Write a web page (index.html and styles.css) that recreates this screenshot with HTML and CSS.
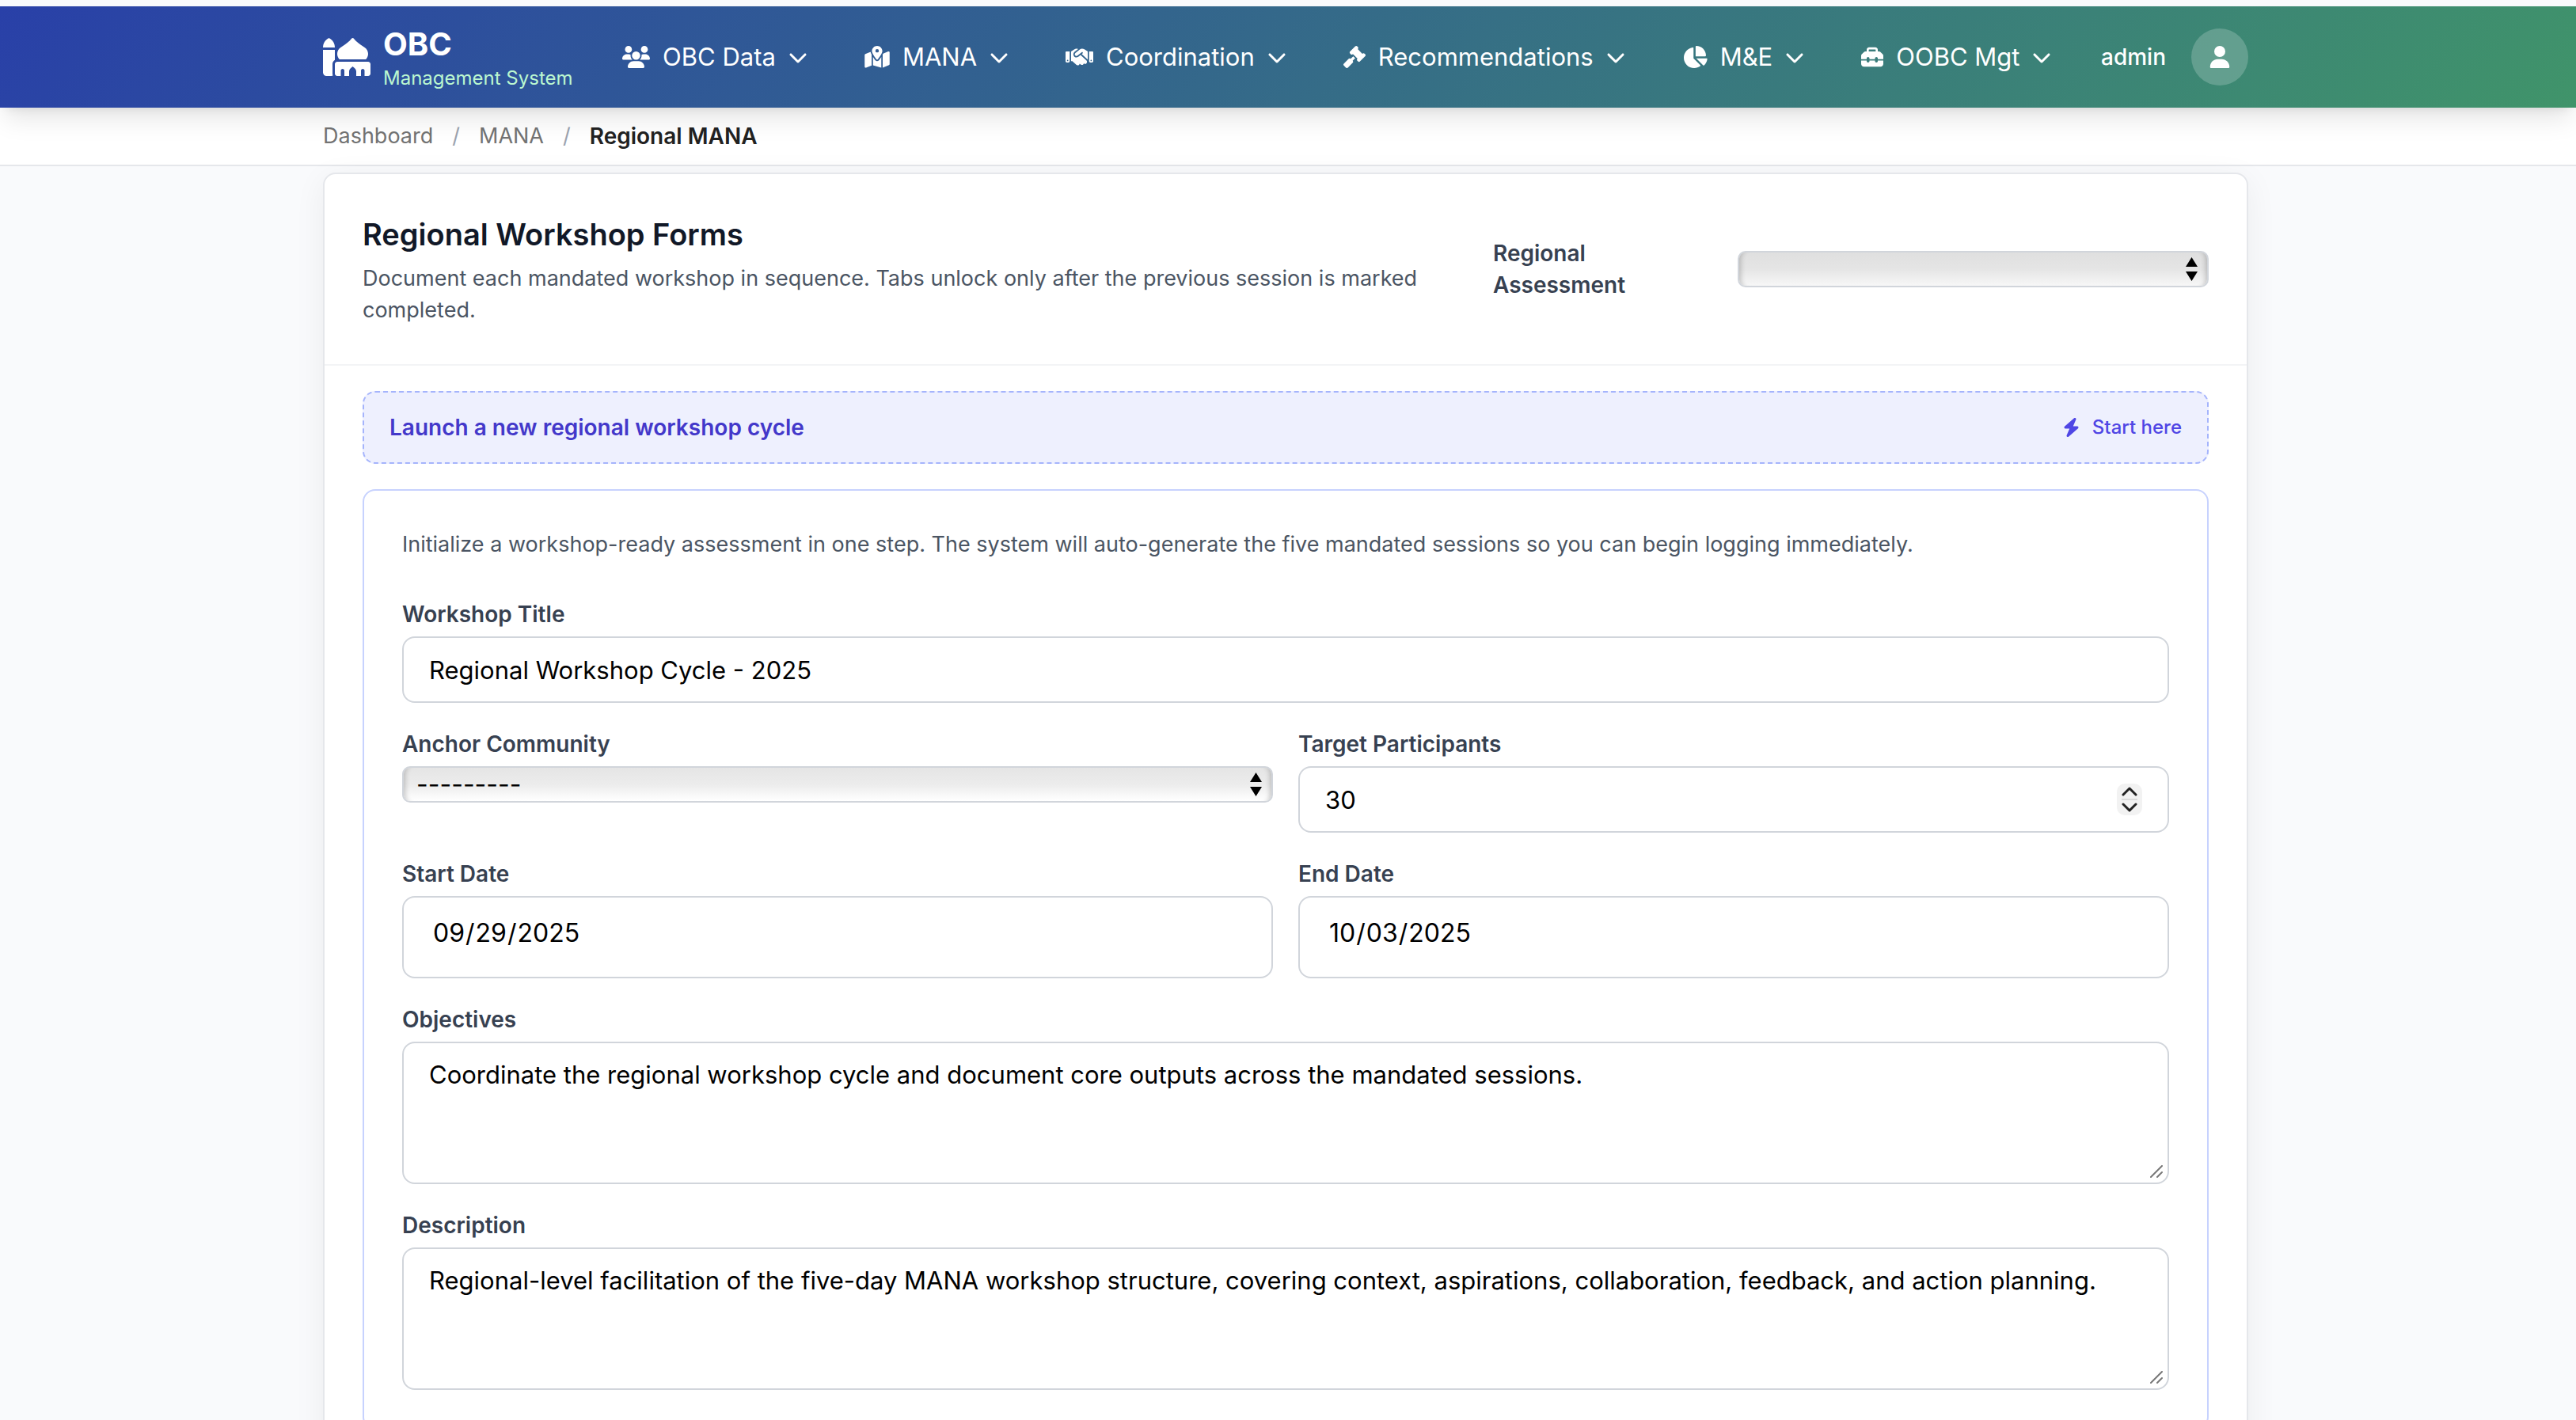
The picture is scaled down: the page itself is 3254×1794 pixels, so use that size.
FILE: index.html
```html
<!DOCTYPE html>
<html lang="en">
<head>
  <meta charset="utf-8">
  <meta name="viewport" content="width=device-width, initial-scale=1">
  <title>Regional MANA</title>
  <link rel="stylesheet" href="styles.css">
</head>
<body>
  <svg class="sprite" aria-hidden="true">
    <symbol id="chevron" viewBox="0 0 512 512"><path d="M233.4 406.6c12.5 12.5 32.8 12.5 45.3 0l192-192c12.5-12.5 12.5-32.8 0-45.3s-32.8-12.5-45.3 0L256 338.7 86.6 169.4c-12.5-12.5-32.8-12.5-45.3 0s-12.5 32.8 0 45.3l192 192z"/></symbol>
    <symbol id="sort" viewBox="0 0 15 30"><path d="M7.500 0L15 12H0zM0 18H15L7.500 30z"/></symbol>
    <symbol id="grip" viewBox="0 0 16 16"><path d="M1 15L15 1M9 15L15 9" fill="none" stroke="currentColor" stroke-width="2" stroke-linecap="round"/></symbol>
  </svg>

  <div class="page">
    <header class="topbar">
      <div class="container topbar-row">
        <a class="brand" href="#">
          <svg class="brand-icon" viewBox="0 0 640 512" aria-hidden="true"><path d="M400 0c5 0 9.800 2.400 12.800 6.400c34.700 46.300 78.100 74.900 133.500 111.500c5.200 3.400 10.500 7 16 10.600c28.900 19.200 45.700 51.700 45.700 86.100c0 28.600-11.300 54.500-29.800 73.400H221.800c-18.400-19-29.800-44.900-29.800-73.400c0-34.400 16.700-66.900 45.700-86.100c5.400-3.600 10.800-7.100 16-10.600C309.100 81.300 352.500 52.700 387.200 6.400c3-4 7.800-6.400 12.800-6.400zM288 512V440c0-13.300-10.700-24-24-24s-24 10.700-24 24v72H192c-17.700 0-32-14.300-32-32V352c0-17.700 14.300-32 32-32H608c17.700 0 32 14.300 32 32V480c0 17.700-14.300 32-32 32H560V440c0-13.300-10.700-24-24-24s-24 10.700-24 24v72H448V454c0-19-8.400-37-23-49.200L400 384l-25 20.800C360.400 417 352 435 352 454v58H288zM70.400 5.200c5.700-4.300 13.500-4.300 19.200 0l16 12C139.800 42.900 160 83.200 160 126v2H0v-2C0 83.200 20.200 42.900 54.400 17.200l16-12zM0 160H160V296.600c-19.100 11.100-32 31.700-32 55.400V480c0 9.600 2.100 18.600 5.800 26.800c-6.600 3.400-14 5.200-21.800 5.200H48c-26.500 0-48-21.500-48-48V160z"/></svg>
          <span class="brand-text">
            <span class="brand-name">OBC</span>
            <span class="brand-sub">Management System</span>
          </span>
        </a>

        <nav class="menu" aria-label="Main">
          <button class="menu-item" type="button">
            <svg class="icon icon-xwide" viewBox="0 0 640 512" aria-hidden="true"><path d="M144 0a80 80 0 1 1 0 160A80 80 0 1 1 144 0zM512 0a80 80 0 1 1 0 160A80 80 0 1 1 512 0zM0 298.700C0 239.800 47.800 192 106.700 192h42.700c15.900 0 31 3.500 44.600 9.700c-1.300 7.200-1.900 14.700-1.900 22.300c0 38.200 16.800 72.500 43.300 96H21.300C9.600 320 0 310.400 0 298.700zM405.300 320h-.7c26.600-23.500 43.300-57.800 43.300-96c0-7.600-.7-15-1.900-22.300c13.600-6.300 28.700-9.700 44.600-9.700h42.700C592.200 192 640 239.800 640 298.700c0 11.800-9.600 21.300-21.300 21.300H405.300zM224 224a96 96 0 1 1 192 0 96 96 0 1 1 -192 0zM128 485.300C128 411.700 187.700 352 261.300 352H378.700C452.300 352 512 411.700 512 485.300c0 14.700-11.900 26.700-26.700 26.700H154.700c-14.700 0-26.700-11.900-26.700-26.700z"/></svg>
            <span>OBC Data</span>
            <svg class="caret" aria-hidden="true"><use href="#chevron"/></svg>
          </button>
          <button class="menu-item" type="button">
            <svg class="icon icon-wide" viewBox="0 0 576 512" aria-hidden="true"><path d="M408 120c0 54.600-73.100 151.900-105.200 192c-7.700 9.600-22 9.600-29.600 0C241.100 271.900 168 174.600 168 120C168 53.700 221.700 0 288 0s120 53.700 120 120zm8 80.400c3.500-6.900 6.700-13.800 9.600-20.600c.5-1.200 1-2.500 1.500-3.700l116-46.400C558.900 123.400 576 135 576 152V422.800c0 9.800-6 18.600-15.100 22.300L416 503V200.400zM137.600 138.300c2.400 14.100 7.200 28.300 12.800 41.500c2.900 6.800 6.100 13.700 9.600 20.600V451.800L32.900 502.700C17.100 509 0 497.400 0 480.400V209.600c0-9.800 6-18.600 15.100-22.300l122.600-49zM327.800 332c13.900-17.400 35.700-45.700 56.200-77V504.300L192 449.400V255c20.500 31.300 42.300 59.600 56.200 77c20.500 25.600 59.100 25.600 79.600 0zM288 152a40 40 0 1 0 0-80 40 40 0 1 0 0 80z"/></svg>
            <span>MANA</span>
            <svg class="caret" aria-hidden="true"><use href="#chevron"/></svg>
          </button>
          <button class="menu-item" type="button">
            <svg class="icon icon-xwide" viewBox="0 0 640 512" aria-hidden="true"><path d="M323.400 85.200l-96.800 78.400c-16.100 13-19.200 36.400-7 53.100c12.900 17.800 38 21.300 55.300 7.800l99.300-77.200c7-5.400 17-4.200 22.500 2.800s4.200 17-2.800 22.500l-20.900 16.200L512 316.800V128h-.7l-3.900-2.500L434.800 79c-15.300-9.800-33.200-15-51.400-15c-21.800 0-43 7.500-60 21.200zm22.800 124.400l-51.700 40.200C263 274.300 217.300 268 193.700 235.600c-22.200-30.500-16.600-73.100 12.700-96.800l83.200-67.300c-11.600-4.900-24.100-7.400-36.800-7.400C234 64 215.700 69.600 200 80l-72 48V352h28.200l91.400 83.400c19.600 17.900 49.900 16.500 67.800-3.100c5.500-6.100 9.200-13.200 11.100-20.600l17 15.600c19.500 17.900 49.900 16.600 67.800-2.900c4.500-4.900 7.800-10.600 9.900-16.500c19.400 13 45.800 10.300 62.100-7.500c17.900-19.500 16.600-49.900-2.900-67.800l-134.200-123zM16 128c-8.800 0-16 7.200-16 16V352c0 17.700 14.300 32 32 32H64c17.700 0 32-14.300 32-32V128H16zM48 320a16 16 0 1 1 0 32 16 16 0 1 1 0-32zM544 128V352c0 17.700 14.300 32 32 32h32c17.700 0 32-14.300 32-32V144c0-8.800-7.200-16-16-16H544zm32 208a16 16 0 1 1 32 0 16 16 0 1 1 -32 0z"/></svg>
            <span>Coordination</span>
            <svg class="caret" aria-hidden="true"><use href="#chevron"/></svg>
          </button>
          <button class="menu-item" type="button">
            <svg class="icon" viewBox="0 0 512 512" aria-hidden="true"><path d="M318.600 9.400c-12.500-12.500-32.800-12.500-45.300 0l-120 120c-12.500 12.500-12.500 32.800 0 45.300l16 16c12.500 12.500 32.800 12.500 45.300 0l4-4L325.400 293.400l-4 4c-12.500 12.500-12.500 32.800 0 45.300l16 16c12.500 12.500 32.800 12.500 45.300 0l120-120c12.500-12.500 12.500-32.800 0-45.300l-16-16c-12.500-12.500-32.800-12.500-45.300 0l-4 4L330.600 74.600l4-4c12.500-12.500 12.500-32.800 0-45.300l-16-16zm-152 288c-12.500-12.500-32.800-12.500-45.300 0l-112 112c-12.500 12.500-12.500 32.800 0 45.300l48 48c12.500 12.500 32.800 12.500 45.300 0l112-112c12.500-12.500 12.500-32.800 0-45.300l-1.400-1.400L272 285.300 226.700 240 168 298.700l-1.400-1.400z"/></svg>
            <span>Recommendations</span>
            <svg class="caret" aria-hidden="true"><use href="#chevron"/></svg>
          </button>
          <button class="menu-item" type="button">
            <svg class="icon icon-wide" viewBox="0 0 576 512" aria-hidden="true"><path d="M304 240V16.600c0-9 7-16.600 16-16.600C443.700 0 544 100.300 544 224c0 9-7.600 16-16.600 16H304zM32 272C32 150.700 122.100 50.300 239 34.300c9.200-1.300 17 6.100 17 15.400V288L412.500 444.500c6.700 6.700 6.200 17.700-1.500 23.100C371.800 495.600 323.800 512 272 512C139.500 512 32 404.600 32 272zm526.400 16c9.300 0 16.600 7.800 15.400 17c-7.700 55.900-34.600 105.600-73.900 142.300c-6 5.600-15.400 5.200-21.200-.7L320 288H558.400z"/></svg>
            <span>M&amp;E</span>
            <svg class="caret" aria-hidden="true"><use href="#chevron"/></svg>
          </button>
          <button class="menu-item" type="button">
            <svg class="icon" viewBox="0 0 512 512" aria-hidden="true"><path d="M176 88v40H336V88c0-4.400-3.600-8-8-8H184c-4.400 0-8 3.600-8 8zm-48 40V88c0-30.900 25.100-56 56-56H328c30.900 0 56 25.100 56 56v40h28.100c12.700 0 24.900 5.100 33.900 14.100l51.900 51.900c9 9 14.100 21.200 14.100 33.900V304H384V288c0-17.700-14.300-32-32-32s-32 14.300-32 32v16H192V288c0-17.700-14.300-32-32-32s-32 14.300-32 32v16H0V227.900c0-12.700 5.100-24.900 14.100-33.900l51.900-51.900c9-9 21.200-14.100 33.900-14.100H128zM0 416V336H128v16c0 17.700 14.300 32 32 32s32-14.300 32-32V336H320v16c0 17.700 14.300 32 32 32s32-14.300 32-32V336H512v80c0 35.300-28.700 64-64 64H64c-35.300 0-64-28.700-64-64z"/></svg>
            <span>OOBC Mgt</span>
            <svg class="caret" aria-hidden="true"><use href="#chevron"/></svg>
          </button>
        </nav>

        <a class="account" href="#">
          <span>admin</span>
          <span class="avatar">
            <svg class="icon" viewBox="0 0 448 512" aria-hidden="true"><path d="M224 256A128 128 0 1 0 224 0a128 128 0 1 0 0 256zm-45.700 48C79.800 304 0 383.800 0 482.300C0 498.700 13.300 512 29.700 512H418.300c16.400 0 29.700-13.300 29.700-29.700C448 383.800 368.200 304 269.700 304H178.300z"/></svg>
          </span>
        </a>
      </div>
    </header>

    <nav class="crumbs" aria-label="Breadcrumb">
      <ol class="container crumbs-list">
        <li><a href="#">Dashboard</a></li>
        <li class="crumb-sep" aria-hidden="true">/</li>
        <li><a href="#">MANA</a></li>
        <li class="crumb-sep" aria-hidden="true">/</li>
        <li class="crumb-current" aria-current="page">Regional MANA</li>
      </ol>
    </nav>

    <main class="container">
      <section class="card">
        <div class="card-head">
          <div class="card-intro">
            <h1>Regional Workshop Forms</h1>
            <p>Document each mandated workshop in sequence. Tabs unlock only after the previous session is marked completed.</p>
          </div>
          <div class="assessment">
            <label for="assessment">Regional Assessment</label>
            <div class="select">
              <select id="assessment" class="select-dim"><option></option></select>
              <svg class="select-arrows" aria-hidden="true"><use href="#sort"/></svg>
            </div>
          </div>
        </div>

        <div class="card-body">
          <button class="launch" type="button">
            <span class="launch-title">Launch a new regional workshop cycle</span>
            <span class="launch-hint">
              <svg class="bolt" viewBox="0 0 448 512" aria-hidden="true"><path d="M349.400 44.600c5.900-13.700 1.500-29.700-10.600-38.500s-28.600-8-39.900 1.800l-256 224c-10 8.800-13.600 22.900-8.900 35.300S50.700 288 64 288H175.500L98.600 467.400c-5.900 13.700-1.500 29.700 10.600 38.500s28.600 8 39.900-1.800l256-224c10-8.800 13.600-22.900 8.900-35.300s-16.600-20.700-30-20.700H272.500L349.400 44.600z"/></svg>
              Start here
            </span>
          </button>

          <form class="workshop">
            <p class="workshop-note">Initialize a workshop-ready assessment in one step. The system will auto-generate the five mandated sessions so you can begin logging immediately.</p>

            <div class="fields">
              <div class="field field-full">
                <label for="title">Workshop Title</label>
                <input id="title" class="control" type="text" value="Regional Workshop Cycle - 2025">
              </div>

              <div class="field">
                <label for="community">Anchor Community</label>
                <div class="select">
                  <select id="community"><option>---------</option></select>
                  <svg class="select-arrows" aria-hidden="true"><use href="#sort"/></svg>
                </div>
              </div>
              <div class="field">
                <label for="participants">Target Participants</label>
                <div class="number">
                  <input id="participants" class="control" type="number" value="30">
                  <svg class="stepper" viewBox="0 0 32 40" aria-hidden="true">
                    <rect width="32" height="40" rx="10" fill="#f2f2f2"/>
                    <path d="M6 20H26" stroke="#dcdcdc" stroke-width="2"/>
                    <path d="M8 14L16 6L24 14M8 26L16 34L24 26" fill="none" stroke="#222" stroke-width="3" stroke-linecap="round" stroke-linejoin="round"/>
                  </svg>
                </div>
              </div>

              <div class="field">
                <label for="start">Start Date</label>
                <input id="start" class="control control-date" type="date" value="2025-09-29">
              </div>
              <div class="field">
                <label for="end">End Date</label>
                <input id="end" class="control control-date" type="date" value="2025-10-03">
              </div>

              <div class="field field-full">
                <label for="objectives">Objectives</label>
                <div class="area">
                  <textarea id="objectives" class="control" rows="3">Coordinate the regional workshop cycle and document core outputs across the mandated sessions.</textarea>
                  <svg class="grip" aria-hidden="true"><use href="#grip"/></svg>
                </div>
              </div>
              <div class="field field-full">
                <label for="description">Description</label>
                <div class="area">
                  <textarea id="description" class="control" rows="3">Regional-level facilitation of the five-day MANA workshop structure, covering context, aspirations, collaboration, feedback, and action planning.</textarea>
                  <svg class="grip" aria-hidden="true"><use href="#grip"/></svg>
                </div>
              </div>
            </div>
          </form>
        </div>
      </section>
    </main>
  </div>
</body>
</html>
```
FILE: styles.css
```css
*,
*::before,
*::after {
  box-sizing: border-box;
}

body {
  margin: 0;
  background: #f9fafc;
  color: #111827;
  font-family: Inter, "Liberation Sans", sans-serif;
  font-size: 28px;
  line-height: 40px;
}

h1,
p,
ol {
  margin: 0;
  padding: 0;
}

a {
  color: inherit;
  text-decoration: none;
}

button,
input,
select,
textarea {
  font: inherit;
  color: inherit;
  margin: 0;
}

svg {
  display: block;
  flex: none;
  fill: currentColor;
}

.sprite {
  position: absolute;
  width: 0;
  height: 0;
}

.page {
  height: 100vh;
  padding-top: 8px;
  overflow-y: auto;
  scrollbar-width: none;
}

.container {
  width: 100%;
  max-width: 2566px;
  margin: 0 auto;
  padding: 0 70px 0 64px;
}

/* Top bar */

.topbar {
  position: relative;
  z-index: 2;
  background: linear-gradient(135deg, #2940a8, #40946a);
  box-shadow: 0 20px 30px -6px rgba(0, 0, 0, 0.1), 0 8px 12px -8px rgba(0, 0, 0, 0.1);
  color: #fff;
}

.topbar-row {
  display: flex;
  align-items: center;
  justify-content: space-between;
  height: 128px;
}

.brand {
  display: flex;
  align-items: center;
  gap: 16px;
}

.brand-icon {
  width: 60px;
  height: 48px;
}

.brand-text {
  display: flex;
  flex-direction: column;
}

.brand-name {
  font-size: 40px;
  font-weight: 700;
  line-height: 54px;
}

.brand-sub {
  color: #bbf7d0;
  font-size: 24px;
  line-height: 32px;
}

.menu {
  display: flex;
  gap: 24px;
}

.menu-item {
  display: flex;
  align-items: center;
  gap: 16px;
  padding: 16px 24px;
  border: 0;
  background: none;
  font-size: 31px;
  line-height: 48px;
}

.icon {
  width: 28px;
  height: 28px;
}

.icon-wide {
  width: 32px;
}

.icon-xwide {
  width: 35px;
}

.caret {
  width: 24px;
  height: 24px;
}

.account {
  display: flex;
  align-items: center;
  gap: 32px;
  font-weight: 500;
}

.avatar {
  display: flex;
  align-items: center;
  justify-content: center;
  width: 72px;
  height: 72px;
  border-radius: 50%;
  background: rgba(255, 255, 255, 0.2);
}

/* Breadcrumb */

.crumbs {
  border-bottom: 2px solid #e5e7eb;
  background: #fff;
}

.crumbs-list {
  display: flex;
  gap: 24px;
  padding-top: 16px;
  padding-bottom: 16px;
  color: #737373;
  font-size: 27px;
  list-style: none;
}

.crumb-sep {
  color: #9ca3af;
}

.crumb-current {
  color: #222;
  font-size: 28px;
  font-weight: 600;
}

/* Card */

.card {
  margin: 8px 0 48px;
  border: 2px solid #e5e7eb;
  border-radius: 16px;
  background: #fff;
  box-shadow: 0 8px 40px rgba(0, 0, 0, 0.06);
}

.card-head {
  display: flex;
  align-items: center;
  justify-content: space-between;
  gap: 80px;
  padding: 48px;
  border-bottom: 2px solid #f3f4f6;
}

.card-intro {
  display: grid;
  flex: 1;
  gap: 8px;
}

.card-intro h1 {
  font-size: 38px;
  font-weight: 600;
  line-height: 56px;
}

.card-intro p,
.workshop-note {
  color: #4b5563;
  font-size: 27px;
}

label {
  color: #374151;
  font-weight: 600;
}

.assessment {
  display: grid;
  grid-template-columns: 1fr 2fr;
  align-items: center;
  gap: 12px;
  flex: 0 0 904px;
}

.assessment label {
  padding-right: 48px;
}

.card-body {
  display: grid;
  gap: 32px;
  padding: 32px 48px 48px;
}

.launch {
  display: flex;
  align-items: center;
  justify-content: space-between;
  padding: 24px 32px;
  border: 2px dashed #a5b4fc;
  border-radius: 16px;
  background: #eef0fe;
  text-align: left;
}

.launch-title {
  color: #4338ca;
  font-weight: 600;
}

.launch-hint {
  display: flex;
  align-items: center;
  gap: 16px;
  color: #4f46e5;
  font-size: 24px;
  font-weight: 500;
}

.bolt {
  width: 21px;
  height: 24px;
}

/* Workshop form */

.workshop {
  display: grid;
  gap: 48px;
  padding: 48px;
  border: 2px solid #c7d2fe;
  border-radius: 16px;
}

.fields {
  display: grid;
  grid-template-columns: 1fr 1fr;
  align-items: start;
  gap: 32px;
}

.field {
  display: grid;
  gap: 8px;
}

.field-full {
  grid-column: 1 / -1;
}

.control {
  display: block;
  width: 100%;
  padding: 16px 32px;
  border: 2px solid #d1d5db;
  border-radius: 16px;
  background: #fff;
  color: #000;
  font-size: 31px;
  line-height: 48px;
  resize: none;
  appearance: none;
}

input.control {
  height: 84px;
}

input.control-date {
  height: 104px;
  padding: 16px 36px 26px;
  font-size: 32px;
}

.control-date::-webkit-calendar-picker-indicator,
.control::-webkit-inner-spin-button {
  display: none;
}

.select,
.number,
.area {
  position: relative;
}

select {
  display: block;
  width: 100%;
  height: 46px;
  padding: 0 48px 0 16px;
  border: 2px solid #d1d5db;
  border-radius: 10px;
  background: linear-gradient(#e5e5e5, #ececec 50%, #fff);
  box-shadow: inset 8px 0 6px -6px rgba(0, 0, 0, 0.2), inset -8px 0 6px -6px rgba(0, 0, 0, 0.2);
  color: #000;
  font-size: 32px;
  line-height: 40px;
  appearance: none;
}

.select-dim {
  background: linear-gradient(#dfdfdf, #e5e5e5 50%, #f7f7f7);
}

.select-arrows {
  position: absolute;
  top: 8px;
  right: 14px;
  width: 15px;
  height: 30px;
  color: #000;
  pointer-events: none;
}

.stepper {
  position: absolute;
  top: 22px;
  right: 34px;
  width: 32px;
  height: 40px;
}

.grip {
  position: absolute;
  right: 8px;
  bottom: 8px;
  width: 16px;
  height: 16px;
  color: #777;
  pointer-events: none;
}
```
